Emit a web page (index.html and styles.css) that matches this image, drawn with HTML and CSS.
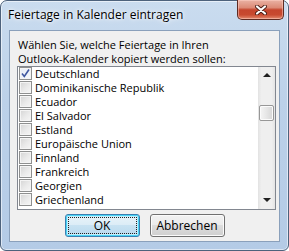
FILE: index.html
```html
<!DOCTYPE html>
<html lang="de">
<head>
    <meta charset="UTF-8">
    <title>Feiertage in Kalender eintragen</title>
    <link rel="stylesheet" href="styles.css">
</head>
<body>
    <div class="window">
        <div class="titlebar">
            <span class="title">Feiertage in Kalender eintragen</span>
            <button class="close">
                <svg width="12" height="10" viewBox="0 0 12 10">
                    <path d="M2 1.5 L10 8.5 M10 1.5 L2 8.5" stroke="#4a1d15" stroke-width="4" stroke-linecap="round"/>
                    <path d="M2 1.5 L10 8.5 M10 1.5 L2 8.5" stroke="#ffffff" stroke-width="2.2" stroke-linecap="round"/>
                </svg>
            </button>
        </div>

        <div class="client">
            <p class="prompt">Wählen Sie, welche Feiertage in Ihren<br>Outlook-Kalender kopiert werden sollen:</p>

            <div class="listbox">
                <ul class="items">
                    <li><span class="check checked">
                        <svg width="11" height="11" viewBox="0 0 11 11"><path d="M2 5.5 L4.3 8.5 L9 1.5" fill="none" stroke="#3f57a0" stroke-width="1.6"/></svg>
                    </span>Deutschland</li>
                    <li><span class="check"></span>Dominikanische Republik</li>
                    <li><span class="check"></span>Ecuador</li>
                    <li><span class="check"></span>El Salvador</li>
                    <li><span class="check"></span>Estland</li>
                    <li><span class="check"></span>Europäische Union</li>
                    <li><span class="check"></span>Finnland</li>
                    <li><span class="check"></span>Frankreich</li>
                    <li><span class="check"></span>Georgien</li>
                    <li><span class="check"></span>Griechenland</li>
                </ul>
                <div class="scrollbar">
                    <div class="arrow"><span class="tri up"></span></div>
                    <div class="track"><div class="thumb"></div></div>
                    <div class="arrow"><span class="tri down"></span></div>
                </div>
            </div>

            <div class="buttons">
                <button class="btn default"><span class="focus">OK</span></button>
                <button class="btn">Abbrechen</button>
            </div>
        </div>
    </div>
</body>
</html>
```

FILE: styles.css
```css
body {
    margin: 0;
    font-family: 'Open Sans', 'Noto Sans', sans-serif;
    font-size: 11px;
    color: #000;
    background: #ffffff;
}

.window {
    width: 289px;
    height: 251px;
    box-sizing: border-box;
    padding: 0 8px 8px 8px;
    border: 1px solid #4d627c;
    border-radius: 7px 7px 6px 6px;
    background: linear-gradient(180deg, #cadcef 0%, #bcd1e9 40%, #b4cbe6 100%);
    box-shadow: inset 0 0 0 1px rgba(255, 255, 255, 0.55);
    display: flex;
    flex-direction: column;
}

.titlebar {
    height: 29px;
    display: flex;
    justify-content: space-between;
    align-items: flex-start;
    margin-right: -4px;
}

.title {
    margin-top: 7px;
    margin-left: -1px;
    font-size: 12px;
    line-height: 14px;
    text-shadow: 0 0 6px #ffffff, 0 0 3px #ffffff;
}

.close {
    width: 47px;
    height: 20px;
    margin-top: -1px;
    padding: 0;
    border: 1px solid #5e2b22;
    border-top: none;
    border-radius: 0 0 5px 5px;
    background: linear-gradient(180deg, #eab2a4 0%, #dc8a76 40%, #c5452d 52%, #c84a30 78%, #e38a6e 100%);
    box-shadow: inset 0 0 0 1px rgba(255, 210, 200, 0.5);
    display: flex;
    align-items: center;
    justify-content: center;
}

.client {
    height: 213px;
    box-sizing: border-box;
    border: 1px solid #8aa0bb;
    background: #f0f0f0;
    padding: 7px 0 0 7px;
}

.prompt {
    margin: 0 0 0 1px;
    line-height: 14px;
}

.listbox {
    width: 259px;
    height: 144px;
    box-sizing: border-box;
    border: 1px solid #828790;
    background: #ffffff;
    display: flex;
    justify-content: space-between;
}

.items {
    list-style: none;
    margin: 0;
    padding: 0;
}

.items li {
    height: 14px;
    display: flex;
    align-items: center;
    padding-left: 1px;
    white-space: nowrap;
}

.check {
    width: 13px;
    height: 13px;
    box-sizing: border-box;
    margin-right: 3px;
    border: 1px solid #8e8f8f;
    background: linear-gradient(135deg, #d4d4d4 0%, #eaeaea 55%, #f6f6f6 100%);
    box-shadow: inset 0 0 0 1px #f4f4f4;
    display: flex;
    align-items: center;
    justify-content: center;
}

.check.checked {
    background: linear-gradient(135deg, #e6ebf5 0%, #f6f8fb 100%);
}

.scrollbar {
    width: 17px;
    display: flex;
    flex-direction: column;
    background: linear-gradient(90deg, #e2e2e2 0%, #efefef 20%, #efefef 80%, #e4e4e4 100%);
}

.arrow {
    height: 17px;
    display: flex;
    align-items: center;
    justify-content: center;
}

.tri {
    width: 0;
    height: 0;
    border-left: 4px solid transparent;
    border-right: 4px solid transparent;
}

.tri.up {
    border-bottom: 4px solid #202020;
}

.tri.down {
    border-top: 4px solid #202020;
}

.track {
    flex: 1;
    padding-top: 21px;
}

.thumb {
    width: 15px;
    height: 16px;
    box-sizing: border-box;
    margin-left: 1px;
    border: 1px solid #979797;
    border-radius: 2px;
    background: linear-gradient(90deg, #f5f5f5 0%, #e6e6e6 50%, #d6d6d6 100%);
    box-shadow: inset 0 0 0 1px #fbfbfb;
}

.buttons {
    display: flex;
    justify-content: center;
    gap: 10px;
    margin-top: 4px;
    margin-left: -7px;
}

.btn {
    width: 75px;
    height: 23px;
    padding: 0;
    font-family: inherit;
    font-size: 12px;
    color: #000;
    border: 1px solid #707070;
    border-radius: 3px;
    background: linear-gradient(180deg, #f2f2f2 0%, #ebebeb 49%, #dddddd 50%, #cfcfcf 100%);
    box-shadow: inset 0 0 0 1px #fbfbfb;
}

.btn.default {
    border-color: #3c7fb1;
    background: linear-gradient(180deg, #eaf4fa 0%, #dbecf6 49%, #c8e2f2 50%, #b8d9ee 100%);
    box-shadow: inset 0 0 0 1px #48d4f5, inset 0 0 0 2px #c4ecfb;
    display: flex;
    align-items: center;
    justify-content: center;
}

.focus {
    display: block;
    width: 67px;
    height: 15px;
    line-height: 15px;
    box-sizing: border-box;
    outline: 1px dotted #202020;
}
```
